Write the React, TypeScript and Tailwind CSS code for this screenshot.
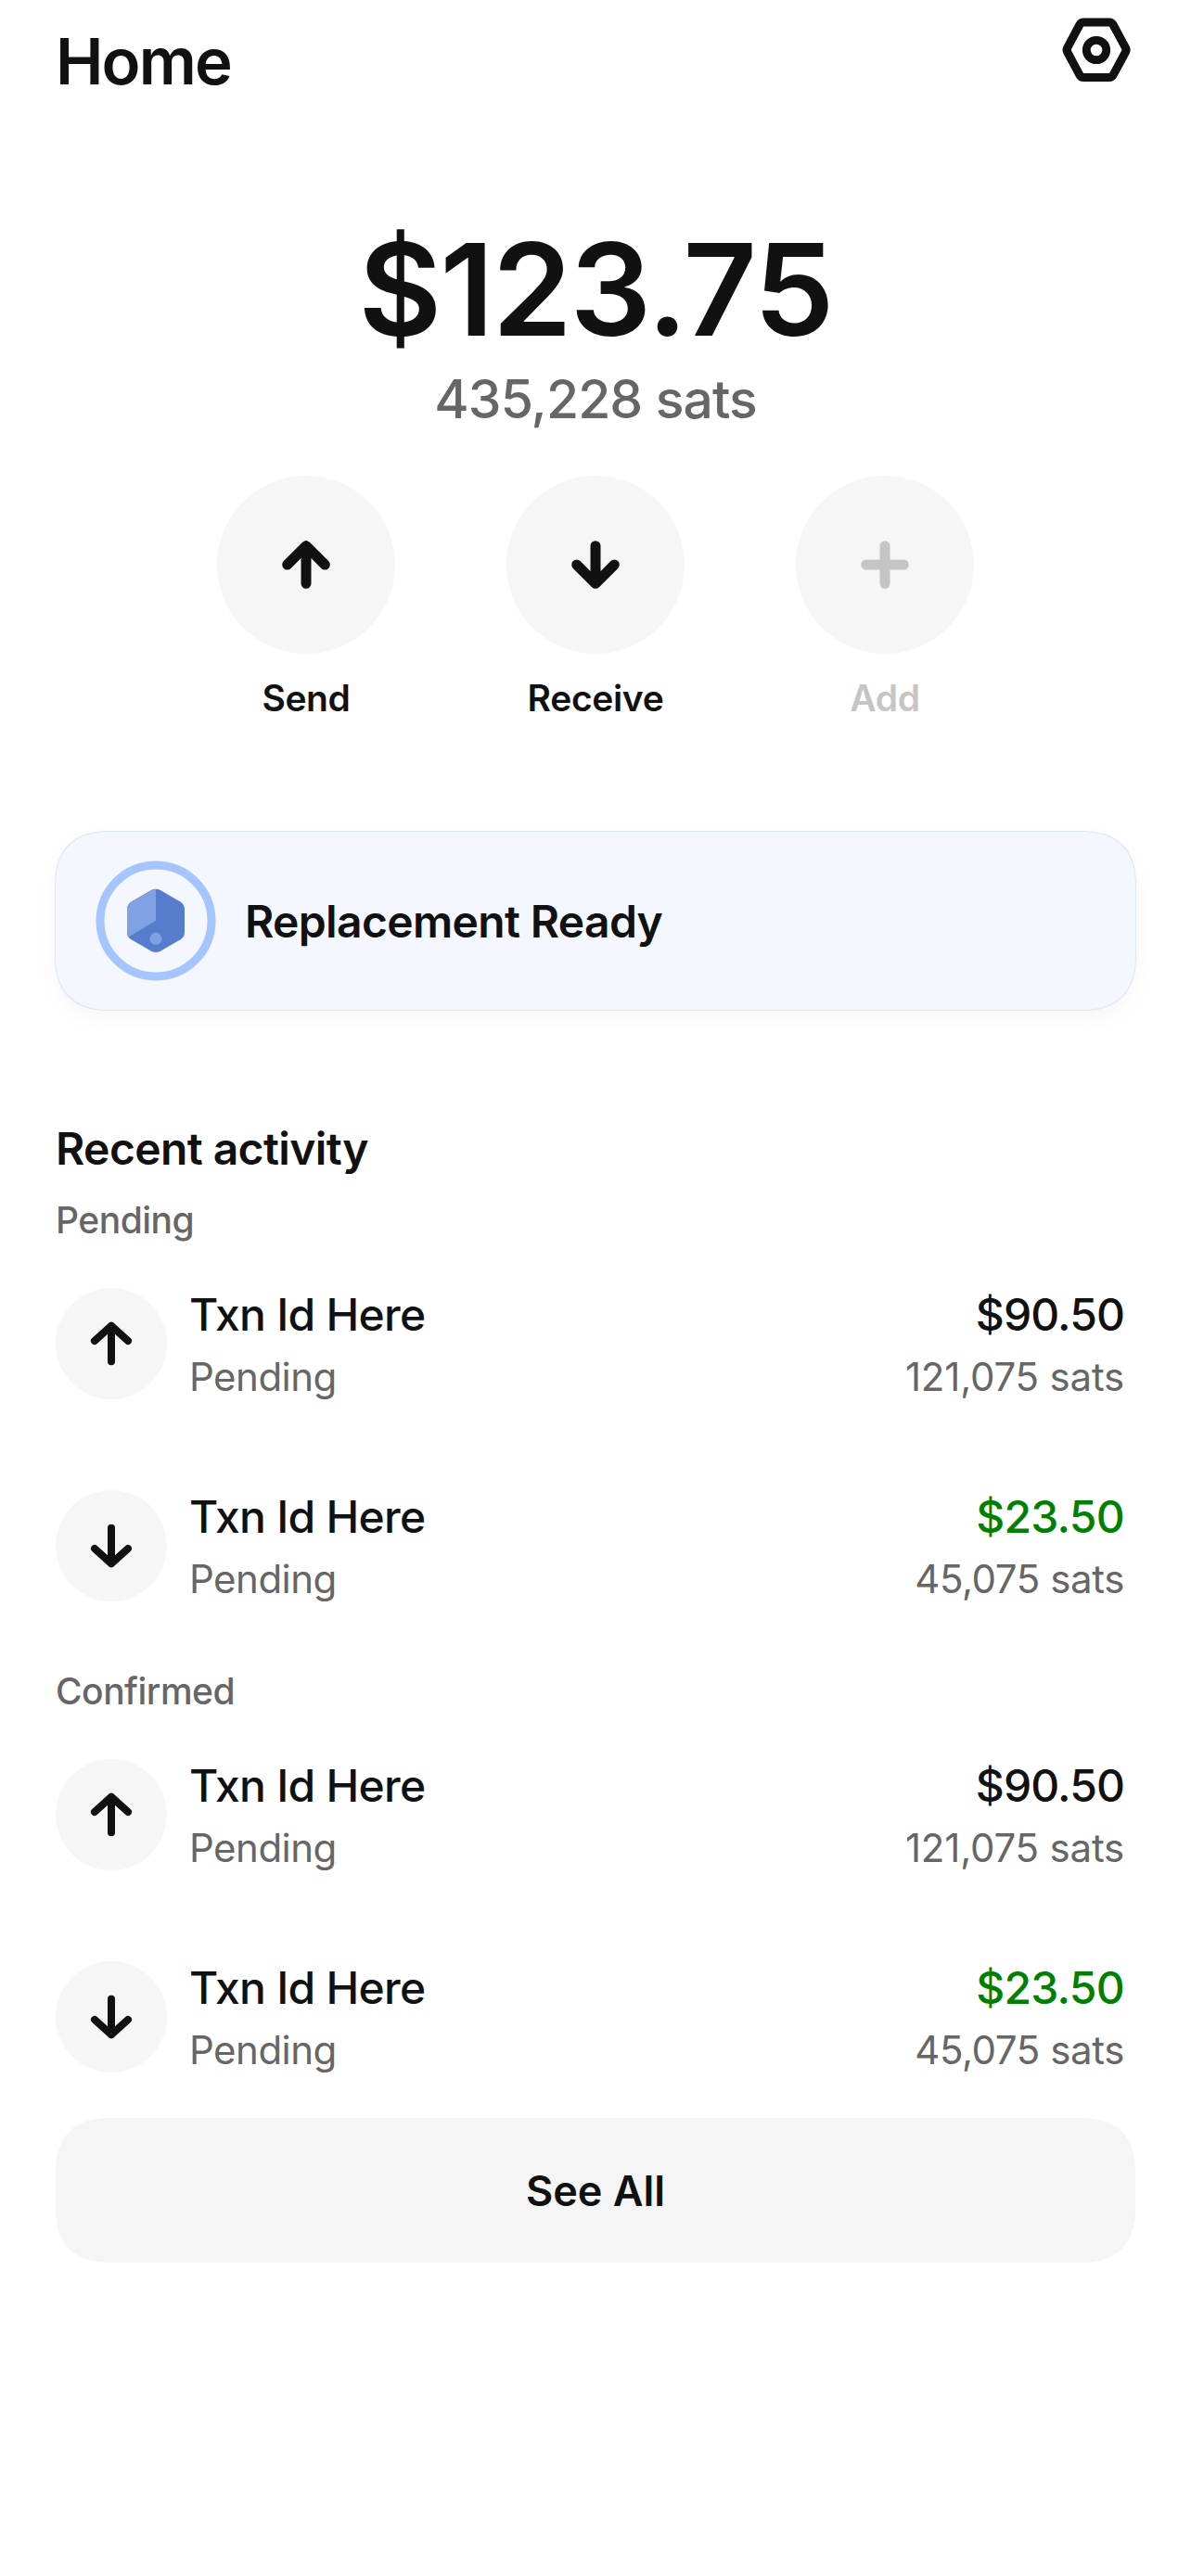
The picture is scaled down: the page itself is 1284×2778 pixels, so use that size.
import React from "react";

type Dir = "up" | "down";

function SettingsIcon() {
  return (
    <svg className="mt-3 h-[84px] w-[84px]" viewBox="0 0 84 84" stroke="#111111">
      <path
        d="M28.2 16.7H55.8L69.4 41.8L55.8 66.9H28.2L14.8 41.8Z"
        className="[paint-order:stroke]"
        fill="#ffffff"
        strokeWidth="18.4"
        strokeLinejoin="round"
      />
      {/* trims the inner half of the outline so the opening keeps its sharp corners */}
      <path d="M28.2 16.7H55.8L69.4 41.8L55.8 66.9H28.2L14.8 41.8Z" fill="#ffffff" stroke="none" />
      <circle cx="42" cy="42" r="10.7" fill="none" strokeWidth="8.8" />
    </svg>
  );
}

function ActionIcon({ kind }: { kind: Dir | "plus" }) {
  const d =
    kind === "up"
      ? "M30 50.3V9.7M9.7 30L30 9.7L50.3 30"
      : kind === "down"
        ? "M30 9.7V50.3M9.7 30L30 50.3L50.3 30"
        : "M30 9.7V50.3M9.7 30H50.3";
  return (
    <svg className="h-[60px] w-[60px]" viewBox="0 0 60 60" fill="none" stroke="currentColor" strokeWidth="11" strokeLinecap="round" strokeLinejoin="round">
      <path d={d} />
    </svg>
  );
}

function RowIcon({ dir }: { dir: Dir }) {
  return (
    <svg className="h-[60px] w-[60px]" viewBox="0 0 60 60" fill="none" stroke="#111111" strokeWidth="8" strokeLinecap="round" strokeLinejoin="round">
      <path d={dir === "up" ? "M30 49.3V10.7M12 27L30 10.7L48 27" : "M30 10.7V49.3M12 33L30 49.3L48 33"} />
    </svg>
  );
}

function Action({ kind, label, disabled }: { kind: Dir | "plus"; label: string; disabled?: boolean }) {
  return (
    <button className={disabled ? "flex w-48 flex-col items-center text-[#c5c5c5]" : "flex w-48 flex-col items-center text-[#111111]"}>
      <span className="flex h-48 w-48 items-center justify-center rounded-full bg-[#f6f6f6]">
        <ActionIcon kind={kind} />
      </span>
      <span className="mt-6 text-[39px] leading-[48px] font-semibold tracking-[-0.35px]">{label}</span>
    </button>
  );
}

function Device() {
  return (
    <svg className="h-[132px] w-[132px] shrink-0" viewBox="0 0 132 132" fill="none">
      <circle cx="66" cy="66" r="60" stroke="#a5c5ff" strokeWidth="9" />
      <clipPath id="hex">
        <path d="M61.5 32.8Q66 30.6 70.5 32.8L92.5 45.4Q97 48.4 97 53.4V78.4Q97 83.4 92.5 86.2L70.5 98.9Q66 101.1 61.5 98.9L39.5 86.2Q35 83.4 35 78.4V53.4Q35 48.4 39.5 45.4Z" />
      </clipPath>
      <g clipPath="url(#hex)">
        <path d="M30 26H102V106H30Z" fill="#567dcc" />
        <path d="M66 26V65.8L30 87.5V26Z" fill="#80a1e2" />
        <circle cx="66" cy="85.3" r="6.5" fill="#80a1e2" />
      </g>
    </svg>
  );
}

function Row({ dir, amount, sats }: { dir: Dir; amount: string; sats: string }) {
  return (
    <div className="flex h-[120px] items-start pr-3">
      <div className="flex h-[120px] w-[120px] items-center justify-center rounded-full bg-[#f6f6f6]">
        <RowIcon dir={dir} />
      </div>
      <div className="ml-6 flex flex-1 flex-col gap-[13px]">
        <span className="text-[48px] leading-[58px] font-medium tracking-[-0.75px]">Txn Id Here</span>
        <span className="text-[42px] leading-[50px] tracking-[-0.5px] text-[#666666]">Pending</span>
      </div>
      <div className="flex flex-col items-end gap-[13px]">
        <span
          className={
            dir === "up"
              ? "text-[48px] leading-[58px] font-medium tracking-[-0.9px]"
              : "text-[48px] leading-[58px] font-medium tracking-[-0.75px] text-[#008000]"
          }
        >
          {amount}
        </span>
        <span
          className={
            dir === "up"
              ? "text-[42px] leading-[50px] tracking-[-0.2px] text-[#666666]"
              : "text-[42px] leading-[50px] tracking-[-0.4px] text-[#666666]"
          }
        >
          {sats}
        </span>
      </div>
    </div>
  );
}

function Group({ title }: { title: string }) {
  return (
    <div>
      <h3 className="text-[39px] leading-[48px] font-medium tracking-[-0.5px] text-[#666666]">{title}</h3>
      <div className="mt-[49px] flex flex-col gap-[98px]">
        <Row dir="up" amount="$90.50" sats="121,075 sats" />
        <Row dir="down" amount="$23.50" sats="45,075 sats" />
      </div>
    </div>
  );
}

export default function App() {
  return (
    <div className="flex h-[2778px] w-[1284px] flex-col overflow-hidden bg-white px-[60px] font-[Inter,sans-serif] text-[#111111]">
      <header className="flex h-[228px] items-start justify-between">
        <h1 className="mt-6 text-[69px] leading-[84px] font-semibold tracking-[-1.9px]">Home</h1>
        <button>
          <SettingsIcon />
        </button>
      </header>

      <section className="flex flex-col items-center">
        <div className="text-[138px] leading-[168px] font-semibold tracking-[-2px]">$123.75</div>
        <div className="text-[57px] leading-[69px] font-medium tracking-[-0.9px] text-[#666666]">435,228 sats</div>
        <div className="mt-12 flex gap-[120px]">
          <Action kind="up" label="Send" />
          <Action kind="down" label="Receive" />
          <Action kind="plus" label="Add" disabled />
        </div>
      </section>

      <section className="mt-[120px] flex h-48 items-center gap-[30px] rounded-[60px] bg-[#f4f7ff] pl-[42px] shadow-[0_0_0_1px_#dfe7f7,0_9px_24px_rgba(0,0,0,0.04)] [corner-shape:superellipse(1.3)]">
        <Device />
        <span className="pt-0.5 text-[48px] leading-[58px] font-semibold tracking-[-0.65px]">Replacement Ready</span>
      </section>

      <section className="mt-[121px]">
        <h2 className="mb-6 text-[48px] leading-[58px] font-semibold tracking-[-0.6px]">Recent activity</h2>
        <div className="flex flex-col gap-[73px]">
          <Group title="Pending" />
          <Group title="Confirmed" />
        </div>
      </section>

      <button className="mt-[49px] h-[156px] w-full shrink-0 rounded-[60px] bg-[#f5f5f5] pt-0.5 text-[45px] leading-[54px] font-semibold [corner-shape:superellipse(1.3)]">
        See All
      </button>
    </div>
  );
}
